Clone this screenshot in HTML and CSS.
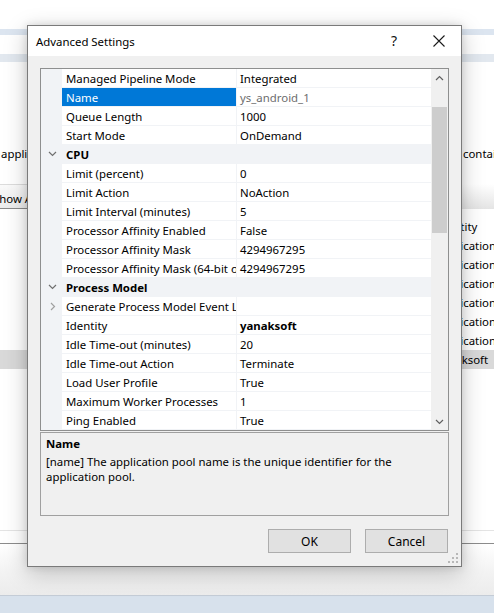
FILE: index.html
```html
<!DOCTYPE html>
<html>
<head>
<meta charset="utf-8">
<link rel="stylesheet" href="styles.css">
</head>
<body>
<div class="screen">
  <div class="bg">
    <div class="gap h29"></div>
    <div class="band blue1"></div>
    <div class="gap h19"></div>
    <div class="band blue2"></div>
    <div class="gap h82"></div>
    <div class="bgrow h18">
      <span class="ltext">applications</span>
      <span class="rcol narrow">contains</span>
    </div>
    <div class="gap h22"></div>
    <div class="toolbar">
      <span class="showall">Show All</span>
      <span class="rhead"></span>
    </div>
    <div class="gap h8"></div>
    <div class="bgrow h19"><span></span><span class="rcol">Identity</span></div>
    <div class="bgrow h19"><span></span><span class="rcol">ApplicationPoolIdentity</span></div>
    <div class="bgrow h19"><span></span><span class="rcol">ApplicationPoolIdentity</span></div>
    <div class="bgrow h19"><span></span><span class="rcol">ApplicationPoolIdentity</span></div>
    <div class="bgrow h19"><span></span><span class="rcol">ApplicationPoolIdentity</span></div>
    <div class="bgrow h19"><span></span><span class="rcol">ApplicationPoolIdentity</span></div>
    <div class="bgrow h19"><span></span><span class="rcol">ApplicationPoolIdentity</span></div>
    <div class="bgrow h19 selrow"><span></span><span class="rcol">yanaksoft</span></div>
    <div class="gap h161"></div>
    <div class="line l1"></div>
    <div class="gap h12"></div>
    <div class="line l2"></div>
    <div class="shadowzone"></div>
    <div class="taskband"></div>
  </div>

  <div class="dialog">
    <div class="titlebar">
      <span class="title">Advanced Settings</span>
      <span class="help">?</span>
      <svg class="close" width="12" height="12" viewBox="0 0 12 12"><path d="M0.5 0.5 L11.5 11.5 M11.5 0.5 L0.5 11.5" stroke="#1a1a1a" stroke-width="1.1" fill="none"/></svg>
    </div>
    <div class="body">
      <div class="grid">
        <div class="rows">
          <div class="row"><div class="gut"></div><div class="lab">Managed Pipeline Mode</div><div class="val">Integrated</div></div>
          <div class="row"><div class="gut"></div><div class="lab sel">Name</div><div class="val ro">ys_android_1</div></div>
          <div class="row"><div class="gut"></div><div class="lab">Queue Length</div><div class="val">1000</div></div>
          <div class="row"><div class="gut"></div><div class="lab">Start Mode</div><div class="val">OnDemand</div></div>
          <div class="row cat"><div class="gut"><svg width="9" height="6" viewBox="0 0 9 6"><path d="M1 1 L4.5 4.5 L8 1" stroke="#707070" stroke-width="1.2" fill="none"/></svg></div><div class="catname">CPU</div></div>
          <div class="row"><div class="gut"></div><div class="lab">Limit (percent)</div><div class="val">0</div></div>
          <div class="row"><div class="gut"></div><div class="lab">Limit Action</div><div class="val">NoAction</div></div>
          <div class="row"><div class="gut"></div><div class="lab">Limit Interval (minutes)</div><div class="val">5</div></div>
          <div class="row"><div class="gut"></div><div class="lab">Processor Affinity Enabled</div><div class="val">False</div></div>
          <div class="row"><div class="gut"></div><div class="lab">Processor Affinity Mask</div><div class="val">4294967295</div></div>
          <div class="row"><div class="gut"></div><div class="lab">Processor Affinity Mask (64-bit option)</div><div class="val">4294967295</div></div>
          <div class="row cat"><div class="gut"><svg width="9" height="6" viewBox="0 0 9 6"><path d="M1 1 L4.5 4.5 L8 1" stroke="#707070" stroke-width="1.2" fill="none"/></svg></div><div class="catname">Process Model</div></div>
          <div class="row"><div class="gut"><svg width="6" height="9" viewBox="0 0 6 9"><path d="M1 1 L4.5 4.5 L1 8" stroke="#a0a0a0" stroke-width="1.2" fill="none"/></svg></div><div class="lab">Generate Process Model Event Log Entry</div><div class="val"></div></div>
          <div class="row"><div class="gut"></div><div class="lab">Identity</div><div class="val bold">yanaksoft</div></div>
          <div class="row"><div class="gut"></div><div class="lab">Idle Time-out (minutes)</div><div class="val">20</div></div>
          <div class="row"><div class="gut"></div><div class="lab">Idle Time-out Action</div><div class="val">Terminate</div></div>
          <div class="row"><div class="gut"></div><div class="lab">Load User Profile</div><div class="val">True</div></div>
          <div class="row"><div class="gut"></div><div class="lab">Maximum Worker Processes</div><div class="val">1</div></div>
          <div class="row"><div class="gut"></div><div class="lab">Ping Enabled</div><div class="val">True</div></div>
        </div>
        <div class="scrollbar">
          <div class="arrow"><svg width="9" height="6" viewBox="0 0 9 6"><path d="M1 5 L4.5 1.5 L8 5" stroke="#606060" stroke-width="1.2" fill="none"/></svg></div>
          <div class="track"><div class="thumb"></div></div>
          <div class="arrow"><svg width="9" height="6" viewBox="0 0 9 6"><path d="M1 1 L4.5 4.5 L8 1" stroke="#606060" stroke-width="1.2" fill="none"/></svg></div>
        </div>
      </div>
      <div class="desc">
        <div class="dtitle">Name</div>
        <div class="dtext">[name] The application pool name is the unique identifier for the application pool.</div>
      </div>
      <div class="buttons">
        <button class="btn">OK</button>
        <button class="btn">Cancel</button>
      </div>
      <svg class="grip" width="10" height="10" viewBox="0 0 10 10">
        <rect x="8" y="0" width="2" height="2" fill="#b8b8b8"/>
        <rect x="4" y="4" width="2" height="2" fill="#b8b8b8"/>
        <rect x="8" y="4" width="2" height="2" fill="#b8b8b8"/>
        <rect x="0" y="8" width="2" height="2" fill="#b8b8b8"/>
        <rect x="4" y="8" width="2" height="2" fill="#b8b8b8"/>
        <rect x="8" y="8" width="2" height="2" fill="#b8b8b8"/>
      </svg>
    </div>
  </div>
</div>
</body>
</html>
```

FILE: styles.css
```css
* { box-sizing: border-box; }
html, body { margin: 0; padding: 0; }
body {
  font-family: "Segoe UI", "Noto Sans", "Open Sans", sans-serif;
  font-size: 11.4px;
  color: #000;
  background: #fff;
}
.screen {
  position: relative;
  width: 494px;
  height: 613px;
  overflow: hidden;
  background: #fff;
}
.bg { display: flex; flex-direction: column; width: 494px; height: 613px; }
.gap { flex: none; }
.h29 { height: 29px; }
.h19 { height: 19px; }
.h82 { height: 82px; }
.h22 { height: 22px; }
.h8 { height: 8px; }
.h12 { height: 12px; }
.h18 { height: 18px; }
.h161 { height: 161px; }
.band { flex: none; }
.blue1 { height: 6px; background: #dce5f0; }
.blue2 { height: 8px; background: #e2e8ef; }
.bgrow {
  flex: none;
  display: flex;
  justify-content: space-between;
  align-items: center;
  white-space: nowrap;
  overflow: hidden;
}
.ltext { padding-left: 1px; }
.rcol { width: 58px; overflow: hidden; white-space: nowrap; }
.rcol.narrow { width: 31px; }
.selrow { background: #d9d9d9; }
.toolbar {
  flex: none;
  height: 25px;
  display: flex;
  justify-content: space-between;
  align-items: stretch;
}
.showall {
  margin-left: -15px;
  padding: 6px 8px 0;
  border-top: 1px solid #dcdcdc;
  border-bottom: 1px solid #8a8a8a;
  border-right: 1px solid #8a8a8a;
  background: linear-gradient(#fafafa, #ececec);
  width: 80px;
  white-space: nowrap;
  overflow: hidden;
}
.rhead { width: 40px; background: linear-gradient(#ffffff, #e4e4e4); }
.line { flex: none; height: 1px; }
.l1 { background: #e4e4e4; }
.l2 { background: #8c8c8c; }
.shadowzone { flex: 1; background: linear-gradient(#ffffff, #f2f2f2 60%, #ececec); }
.taskband { flex: none; height: 18px; background: #d7e1ec; border-top: 1px solid #c4ccd6; }

/* dialog */
.dialog {
  position: absolute;
  left: 27px;
  top: 25px;
  width: 435px;
  height: 542px;
  border: 1px solid #7a7a7a;
  background: #f0f0f0;
  box-shadow: 0 6px 22px rgba(0,0,0,0.22), 0 0 8px rgba(0,0,0,0.12);
  display: flex;
  flex-direction: column;
}
.titlebar {
  flex: none;
  height: 30px;
  background: #fff;
  display: flex;
  align-items: center;
  padding-left: 8px;
}
.title { flex: 1; }
.help { font-size: 14px; margin-right: 36px; color: #111; margin-top: -1px; }
.close { margin-right: 16px; }
.body {
  position: relative;
  flex: 1;
  padding: 12px 12px 0 12px;
  display: flex;
  flex-direction: column;
}
.grid {
  flex: none;
  height: 363px;
  border: 1px solid #8e8f8f;
  background: #fff;
  display: flex;
  overflow: hidden;
}
.rows { flex: 1; overflow: hidden; }
.row {
  height: 19px;
  display: flex;
  align-items: stretch;
  border-bottom: 1px solid #f1f3f6;
  white-space: nowrap;
}
.gut {
  width: 21px;
  flex: none;
  background: #f1f3f6;
  display: flex;
  align-items: center;
  justify-content: center;
  padding-left: 2px;
}
.lab {
  width: 175px;
  flex: none;
  padding: 2px 0 0 4px;
  line-height: 16px;
  overflow: hidden;
  border-right: 1px solid #f1f3f6;
}
.lab.sel { background: #0078d7; color: #fff; }
.val { flex: 1; padding: 2px 0 0 3px; line-height: 16px; overflow: hidden; }
.val.ro { color: #6d6d6d; }
.val.bold { font-weight: bold; }
.row.cat { background: #f1f3f6; }
.catname { font-weight: bold; padding: 2px 0 0 4px; line-height: 16px; }
.scrollbar {
  width: 17px;
  flex: none;
  background: #f0f0f0;
  display: flex;
  flex-direction: column;
}
.arrow { height: 17px; display: flex; align-items: center; justify-content: center; }
.track { flex: 1; padding: 0 1px; }
.thumb { margin-top: 21px; height: 126px; background: #cdcdcd; }
.desc {
  flex: none;
  margin-top: 1px;
  height: 84px;
  border: 1px solid #a0a0a0;
  padding: 3px 5px;
  line-height: 15.5px;
}
.dtitle { font-weight: bold; margin-bottom: 2px; }
.dtext { width: 370px; }
.buttons {
  flex: none;
  display: flex;
  justify-content: flex-end;
  gap: 14px;
  margin-top: 13px;
  padding-right: 1px;
}
.btn {
  width: 83px;
  height: 24px;
  background: #e1e1e1;
  border: 1px solid #adadad;
  font-family: inherit;
  font-size: 12px;
  color: #000;
  padding: 0;
}
.grip { position: absolute; right: 3px; bottom: 3px; }
```
